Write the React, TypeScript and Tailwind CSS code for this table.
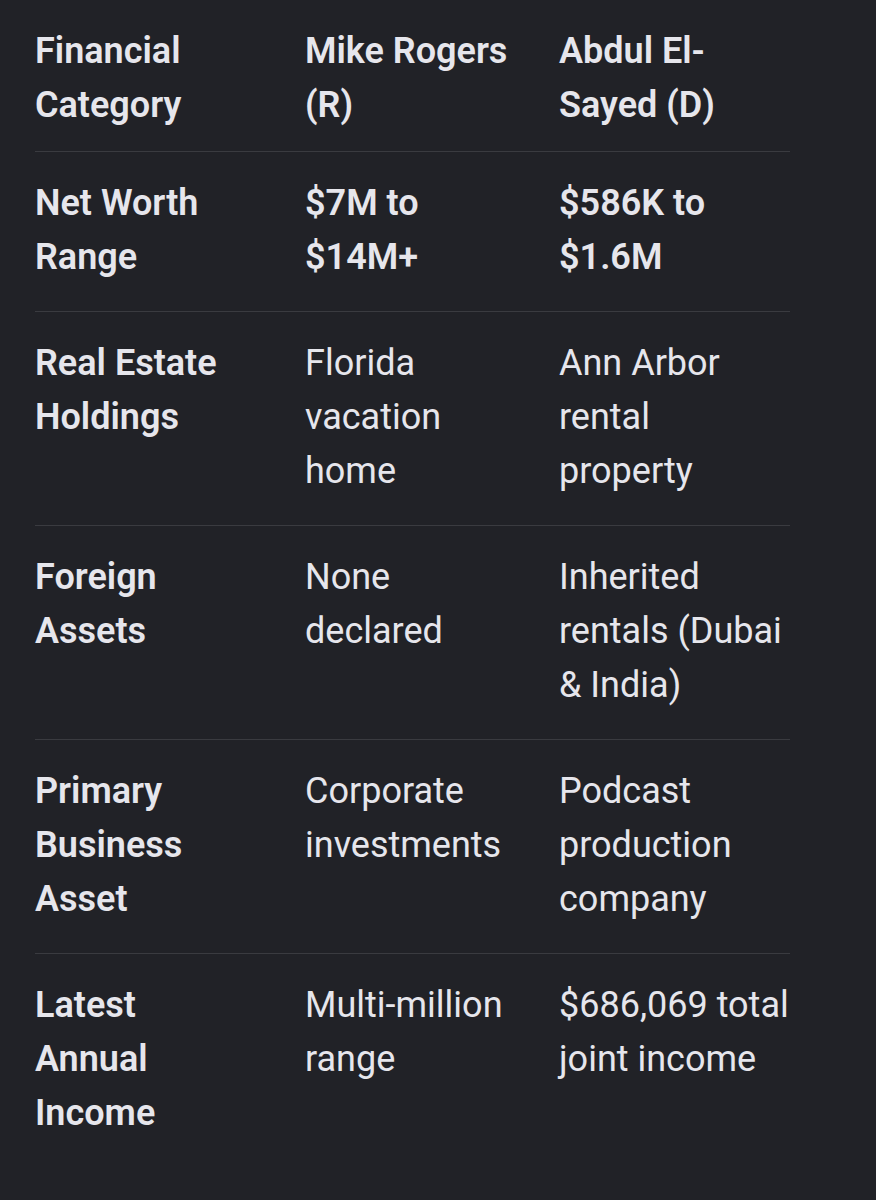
import React from 'react'

type Row = {
  label: string
  rogers: string
  sayed: string
  strong?: boolean
}

const rows: Row[] = [
  { label: 'Net Worth Range', rogers: '$7M to $14M+', sayed: '$586K to $1.6M', strong: true },
  { label: 'Real Estate Holdings', rogers: 'Florida vacation home', sayed: 'Ann Arbor rental property' },
  { label: 'Foreign Assets', rogers: 'None declared', sayed: 'Inherited rentals (Dubai & India)' },
  { label: 'Primary Business Asset', rogers: 'Corporate investments', sayed: 'Podcast production company' },
  { label: 'Latest Annual Income', rogers: 'Multi-million range', sayed: '$686,069 total joint income' },
]

// fixed column widths, right padding keeps the wraps where the screenshot has them
const cols = 'grid grid-cols-[270px_254px_231px]'

const App = () => {
  return (
    <div className="min-h-[1200px] w-full bg-[#212227] pl-[35px] pt-6 text-[36px] leading-[54px] text-[#e6e6ec] font-['Roboto','Liberation_Sans',sans-serif]">
      <div className="w-[755px] divide-y divide-[#3a3b40]">
        <div className={`${cols} pb-[19px] font-semibold`}>
          <p className="pr-[60px]">Financial Category</p>
          <p className="pr-[46px]">Mike Rogers (R)</p>
          <p>Abdul El-Sayed (D)</p>
        </div>
        {rows.map((r) => (
          <div key={r.label} className={`${cols} pt-6 pb-[27px]`}>
            <p className="pr-[60px] font-semibold">{r.label}</p>
            <p className={`pr-[46px] ${r.strong ? 'font-semibold' : ''}`}>{r.rogers}</p>
            <p className={r.strong ? 'font-semibold' : ''}>{r.sayed}</p>
          </div>
        ))}
      </div>
    </div>
  )
}

export default App
